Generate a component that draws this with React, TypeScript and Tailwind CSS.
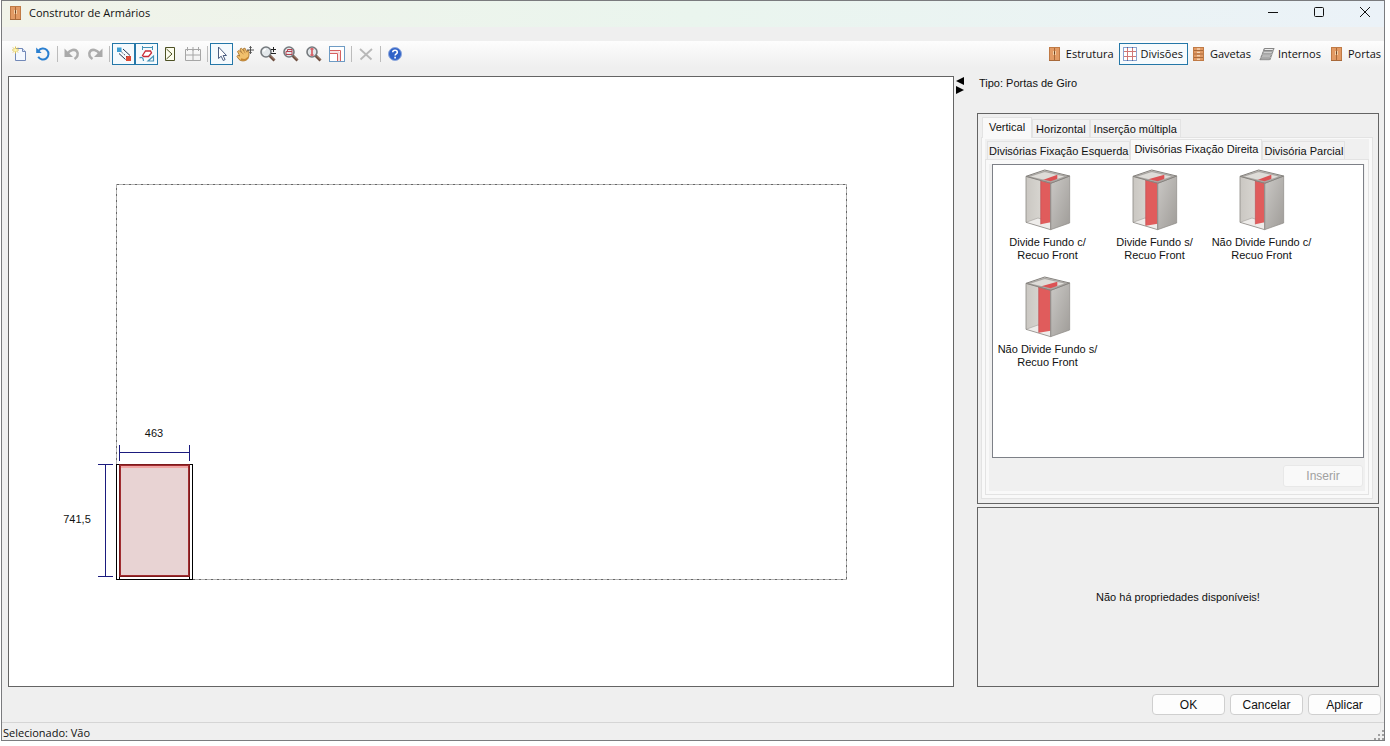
import type { ReactNode } from 'react'

const uiFont = "font-['Open_Sans','Noto_Sans',sans-serif]"
const formFont = "font-['Liberation_Sans',Arial,sans-serif]"

function Svg({ children }: { children: ReactNode }) {
  return (
    <svg width="16" height="16" viewBox="0 0 16 16" fill="none" aria-hidden="true" className="shrink-0">
      {children}
    </svg>
  )
}

const CabinetIcon = () => (
  <Svg>
    <rect x="2.5" y="1.5" width="10" height="13" fill="#e29a64" stroke="#c07a45" />
    <path d="M7.500 2v12" stroke="#a8693a" />
    <path d="M6.500 5v4M8.500 5v4" stroke="#f3cfa6" />
    <path d="M7.500 5.500v2.500" stroke="#6f4526" />
    <path d="M2 14.500h11" stroke="#a8693a" />
  </Svg>
)

const DrawersIcon = () => (
  <Svg>
    <rect x="2.500" y="1.500" width="10" height="13" fill="#e29a64" stroke="#c07a45" />
    <path d="M3 4.500h9M3 8h9M3 11.500h9" stroke="#a8693a" />
    <path d="M6 3h3M6 6.300h3M6 9.800h3M6 13.200h3" stroke="#fbe9d2" />
  </Svg>
)

const GridIcon = () => (
  <Svg>
    <rect x="1.500" y="1.500" width="13" height="13" fill="#fff" stroke="#8ba3cf" />
    <path d="M5.500 2v12M10.500 2v12M2 5.500h12M2 10.500h12" stroke="#d07676" />
    <path d="M5.500 1v1M10.500 1v1M5.500 14v1M10.500 14v1" stroke="#4a66a0" />
  </Svg>
)

const ShelvesIcon = () => (
  <Svg>
    <path d="M5.500 2.500h9.500l-1.300 2H4.500zM4.300 5.800h9.500l-1.300 2H3.300zM3.100 9h9.500l-1.300 2H2.100zM1.900 12.200h9.500l-.9 1.500H1z" fill="#ececec" stroke="#7b7b7b" strokeWidth="0.900" />
    <path d="M5.500 2 1 14M15 2.500l-4 11.500" stroke="#8f8f8f" strokeWidth="0.800" />
  </Svg>
)

const NewIcon = () => (
  <Svg>
    <path d="M3.500 2.500h7l3 3v9h-10z" fill="#f4f8ff" stroke="#7289b8" />
    <path d="M10.500 2.500v3h3" fill="#dce7fa" stroke="#7289b8" />
    <path d="M3.500 .5v7M0 4h7M1 1.500l5 5M6 1.500l-5 5" stroke="#e0c24a" />
    <circle cx="3.500" cy="4" r="1.500" fill="#fff7ae" />
  </Svg>
)

const RefreshIcon = () => (
  <Svg>
    <path d="M3.500 4.800A5.500 5.500 0 1 1 3.200 10.800" stroke="#2a7fd0" strokeWidth="2" />
    <path d="M1.200 1.500v5.500H6.700z" fill="#2a7fd0" />
  </Svg>
)

const UndoIcon = () => (
  <Svg>
    <path d="M3.500 7.500C6 4 11 2.500 13 5.500s0 6-2.500 7.500" stroke="#adadad" strokeWidth="2.600" />
    <path d="M.5 2.500v8.500H9z" fill="#a9a9a9" />
  </Svg>
)

const RedoIcon = () => (
  <Svg>
    <path d="M12.500 7.500C10 4 5 2.500 3 5.500s0 6 2.500 7.500" stroke="#adadad" strokeWidth="2.600" />
    <path d="M15.500 2.500v8.500H7z" fill="#a9a9a9" />
  </Svg>
)

const LinkIcon = () => (
  <Svg>
    <rect x="1" y="1.500" width="4.500" height="4.500" fill="#3f9fd4" />
    <rect x="10" y="10" width="5" height="5" fill="#dc4a36" />
    <path d="M7 3l7 6.500M3 7.500l6.500 6" stroke="#26344c" />
    <path d="M5.500 6l5 4.500" stroke="#26344c" strokeDasharray="1.500 1.500" />
  </Svg>
)

const ShapesIcon = () => (
  <Svg>
    <path d="M3.500 0v4M13.500 0v4M3.500 1.500h10" stroke="#4692b8" />
    <path d="M3.500 9.500 6.500 5H11.500l1 2-3 3.500H4.500z" fill="#fff" stroke="#c92a35" strokeWidth="1.300" />
    <path d="M.5 12c2-1.500 4 0 4 3M14.500 10v5H9z" stroke="#4692b8" strokeWidth="1.200" />
  </Svg>
)

const PanelIcon = () => (
  <Svg>
    <path d="M3.500 1.500h9v13h-9z" fill="#fcfced" stroke="#4d5124" />
    <path d="M4.500 3l5.500 5-5.500 5" stroke="#4d5124" />
  </Svg>
)

const TableIcon = () => (
  <Svg>
    <path d="M.5 3.500h15v11H.5zM.5 9h15M8 3v12M2.500 1v4M8 1v4M13.500 1v4" stroke="#a6a6a6" />
  </Svg>
)

const CursorIcon = () => (
  <Svg>
    <path d="M4.500 1v11.500l2.700-2.300 2 4.300 1.900-.9-2-4.100h3.400z" fill="#fff" stroke="#4a5d80" />
  </Svg>
)

const HandIcon = () => (
  <svg width="18" height="16" viewBox="0 0 18 16" fill="none" aria-hidden="true" className="shrink-0">
    <path d="M1.500 5.500 3 4.500l2.500 2L4 3l1.500-.8 2.500 3L7.500 2.500l1.500-.3 2 4 .5-1.700h1.300c.2 3 .7 6.500-1.300 8.500-2 2.300-6 2.600-8.500.4L1 10.500l.8-1.200 2 .8z" fill="#f1c06c" stroke="#a87530" strokeWidth="0.900" />
    <path d="M5.500 6.500l2 1.500M8 5.200l1.200 2" stroke="#b98240" strokeWidth="0.800" />
    <path d="M5 13c3 1.500 5.500 1 7-1.500" stroke="#c58530" strokeWidth="1.500" />
    <path d="M14.500 .5v7M11 4h7M13.300 1.700l1.200-1.200 1.200 1.200M13.300 6.300l1.200 1.200 1.200-1.200" stroke="#444" strokeWidth="0.900" />
  </svg>
)

function Magnifier({ children }: { children: ReactNode }) {
  return (
    <Svg>
      <path d="M9.500 9.500l5 5" stroke="#6b4b3d" strokeWidth="2.800" />
      <path d="M10.500 9.800l4 4" stroke="#b08b76" strokeWidth="0.900" />
      <circle cx="6" cy="6" r="5" fill="#e3e8eb" stroke="#74797d" strokeWidth="1.600" />
      {children}
    </Svg>
  )
}

const ZoomIcon = () => (
  <Magnifier>
    <path d="M3.500 5.500c.3-1.500 1.200-2.200 2.500-2.300" stroke="#fff" strokeWidth="1.500" />
    <path d="M11 3.500h5M13.500 1v5M11 7.500h5" stroke="#222" />
  </Magnifier>
)

const ZoomWindowIcon = () => (
  <Magnifier>
    <path d="M3 5.500h6v3H3z" stroke="#b64450" />
    <path d="M4.500 5.500v-2H9v2" stroke="#b64450" />
  </Magnifier>
)

const ZoomFitIcon = () => (
  <Magnifier>
    <path d="M4.500 3h3M4.500 9h3M6 3v6" stroke="#d8656b" strokeWidth="1.800" />
  </Magnifier>
)

const FrameIcon = () => (
  <Svg>
    <rect x=".5" y=".5" width="15" height="15" fill="#fff" stroke="#6e9bc4" />
    <path d="M1 4.500h10.500V15M1 7.500h7.500V15" stroke="#d66060" />
    <path d="M1 6h9v9" stroke="#f1c6c6" />
  </Svg>
)

const DeleteIcon = () => (
  <Svg>
    <path d="M2 3l11.500 10.500M14 3 2.500 13.500" stroke="#b8b8b8" strokeWidth="1.800" />
  </Svg>
)

const HelpIcon = () => (
  <Svg>
    <circle cx="8" cy="8" r="6.500" fill="#2f62c8" stroke="#8fa9dd" />
    <path d="M5.700 6.300C5.800 3.500 10.300 3.500 10.300 6.200c0 1.600-2.200 1.600-2.200 3.300M8.100 10.800v1.800" stroke="#fff" strokeWidth="1.600" />
  </Svg>
)

function ToolButton({ label, active = false, children }: { label: string; active?: boolean; children: ReactNode }) {
  return (
    <button
      type="button"
      aria-label={label}
      title={label}
      aria-pressed={active}
      className={`flex h-[22px] w-[23px] items-center justify-center border ${active ? 'border-[#2477a8] bg-[#f5fafd]' : 'border-transparent'}`}
    >
      {children}
    </button>
  )
}

const Separator = () => (
  <div className="flex h-[22px] w-1.5 items-center justify-center">
    <div className="h-4 w-px bg-[#bcbcbc]" />
  </div>
)

function SectionButton({ label, active = false, children }: { label: string; active?: boolean; children: ReactNode }) {
  return (
    <button
      type="button"
      aria-pressed={active}
      className={`flex h-[22px] items-center gap-[3px] border pr-1 pl-0.5 text-[11px] leading-4 ${active ? 'border-[#2477a8] bg-[#f7fbfd]' : 'border-transparent'}`}
    >
      {children}
      {label}
    </button>
  )
}

function Toolbar() {
  return (
    <div className="mt-[14px] flex h-[26px] items-center justify-between bg-linear-to-b from-[#fdfdfd] to-[#efefef] pl-[6px]">
      <div className="flex items-center" role="toolbar" aria-label="Ferramentas">
        <ToolButton label="Novo"><NewIcon /></ToolButton>
        <ToolButton label="Atualizar"><RefreshIcon /></ToolButton>
        <Separator />
        <ToolButton label="Desfazer"><UndoIcon /></ToolButton>
        <ToolButton label="Refazer"><RedoIcon /></ToolButton>
        <Separator />
        <ToolButton label="Associar" active><LinkIcon /></ToolButton>
        <ToolButton label="Cotas" active><ShapesIcon /></ToolButton>
        <ToolButton label="Painel"><PanelIcon /></ToolButton>
        <ToolButton label="Tabela"><TableIcon /></ToolButton>
        <Separator />
        <ToolButton label="Selecionar" active><CursorIcon /></ToolButton>
        <ToolButton label="Mover"><HandIcon /></ToolButton>
        <ToolButton label="Zoom"><ZoomIcon /></ToolButton>
        <ToolButton label="Zoom janela"><ZoomWindowIcon /></ToolButton>
        <ToolButton label="Zoom total"><ZoomFitIcon /></ToolButton>
        <ToolButton label="Quadro"><FrameIcon /></ToolButton>
        <Separator />
        <ToolButton label="Excluir"><DeleteIcon /></ToolButton>
        <Separator />
        <ToolButton label="Ajuda"><HelpIcon /></ToolButton>
      </div>
      <nav className="-mr-0.5 flex items-center" aria-label="Seções">
        <SectionButton label="Estrutura"><CabinetIcon /></SectionButton>
        <SectionButton label="Divisões" active><GridIcon /></SectionButton>
        <SectionButton label="Gavetas"><DrawersIcon /></SectionButton>
        <SectionButton label="Internos"><ShelvesIcon /></SectionButton>
        <SectionButton label="Portas"><CabinetIcon /></SectionButton>
      </nav>
    </div>
  )
}

function Drawing() {
  return (
    <svg viewBox="0 0 944 609" className="h-full w-full" role="img" aria-label="Vista frontal">
      <rect x="107.500" y="107.500" width="730" height="395" fill="none" stroke="#666" strokeDasharray="3 1 1 1" />
      <g fill="#fff" stroke="#000">
        <rect x="107.500" y="387.500" width="3" height="115" />
        <rect x="180.500" y="387.500" width="3" height="115" />
        <rect x="110.500" y="499.500" width="70" height="3" />
      </g>
      <rect x="111" y="388" width="69" height="111" fill="#e8d3d3" stroke="#a02c30" strokeWidth="2" />
      <path d="M112 390h67" stroke="#f0a5a5" strokeWidth="2" />
      <path d="M110 387.500h71M110.500 388v111M180.500 388v111M110 499.500h71" stroke="#7c1a1c" />
      <path d="M110.500 368v16M180.500 368v16M110 375.500h71M96.500 387v113M89 387.500h15M89 499.500h15" stroke="#1b1b7e" />
      <g fill="#111" className="font-['Liberation_Sans',Arial,sans-serif] text-[11px]" textAnchor="middle">
        <text x="145" y="360">463</text>
        <text x="68" y="446">741,5</text>
      </g>
    </svg>
  )
}

type Divider = { name: string; x: number; top: number; bottom: number }

const dividers: Divider[] = [
  { name: 'Divide Fundo c/ Recuo Front', x: 44, top: 32, bottom: 163 },
  { name: 'Divide Fundo s/ Recuo Front', x: 38, top: 30, bottom: 167 },
  { name: 'Não Divide Fundo c/ Recuo Front', x: 46, top: 32, bottom: 163 },
  { name: 'Não Divide Fundo s/ Recuo Front', x: 38, top: 30, bottom: 167 },
]

function DividerPicture({ x, top, bottom }: { x: number; top: number; bottom: number }) {
  return (
    <svg width="46" height="62" viewBox="-3 -3 138 186" aria-hidden="true">
      <defs>
        <linearGradient id="side" x1="0" y1="0" x2="1" y2="1">
          <stop offset="0" stopColor="#cbc9c6" />
          <stop offset="1" stopColor="#9f9c98" />
        </linearGradient>
        <linearGradient id="inside" x1="0" y1="0" x2="1" y2="0">
          <stop offset="0" stopColor="#cac7c2" />
          <stop offset="1" stopColor="#e0ded9" />
        </linearGradient>
      </defs>
      <path d="M0 19 56 0l75 18-57 22z" fill="#dedcd8" />
      <path d="M0 19l74 21v139L0 157z" fill="url(#inside)" />
      <path d="M0 157l36-13 38 12v23z" fill="#eeecea" />
      <path d="M36 144 0 157M36 144l38 12" stroke="#a8a5a0" strokeWidth="2" fill="none" />
      <path d={`M${x} ${top} 74 40v${bottom - 46}L${x} ${bottom}z`} fill="#e05c5c" />
      <path d={`M${x} ${top} 94 14v13L74 40z`} fill="#dc5254" />
      <path d="M74 40l57-22v141l-57 20z" fill="url(#side)" stroke="#8b8884" strokeWidth="2" />
      <path d="M6 20l50-16 66 15-48 17z" fill="none" stroke="#aaa7a3" strokeWidth="4" />
      <path d="M0 19 56 0l75 18-57 22z" fill="none" stroke="#85827e" strokeWidth="3" strokeLinejoin="round" />
      <path d="M0 19v138l74 22V40" fill="none" stroke="#8f8c88" strokeWidth="2.500" />
      <path d={`M${x} ${top}V${bottom}`} stroke="#b53b40" strokeWidth="1.500" />
    </svg>
  )
}

function Tab({ label, active = false, compact = false }: { label: string; active?: boolean; compact?: boolean }) {
  const shape = active ? 'relative -mb-px h-[21px] bg-[#f9f9f9] pb-[3px]' : 'h-[18px] bg-[#f2f2f2]'
  const padding = compact ? (active ? 'px-[3px]' : 'px-px') : active ? 'px-[6px]' : 'px-[3px]'
  return (
    <button
      type="button"
      role="tab"
      aria-selected={active}
      className={`border border-b-0 border-[#e3e3e3] text-[11px] leading-[14px] whitespace-nowrap ${shape} ${padding}`}
    >
      {label}
    </button>
  )
}

function DivisionsPanel() {
  return (
    <section className="flex min-h-0 flex-1 flex-col border border-[#646464] pt-[3px] pr-[5px] pb-1 pl-[3px]">
      <div className="flex items-end pl-px" role="tablist">
        <Tab label="Vertical" active />
        <Tab label="Horizontal" />
        <Tab label="Inserção múltipla" />
      </div>
      <div className="flex min-h-0 flex-1 flex-col border border-[#e3e3e3] bg-[#f9f9f9] px-[3px] pt-px pb-[3px]">
        <div className="flex items-end bg-[#f0f0f0] pl-0.5" role="tablist">
          <Tab label="Divisórias Fixação Esquerda" compact />
          <Tab label="Divisórias Fixação Direita" compact active />
          <Tab label="Divisória Parcial" compact />
        </div>
        <div className="flex min-h-0 flex-1 flex-col border border-[#e3e3e3] bg-[#f9f9f9] px-[3px] pt-1 pb-[3px]">
          <div className="flex min-h-0 flex-1 flex-col bg-[#f0f0f0] pr-px pb-1 pl-[3px]">
            <ul className="flex min-h-0 flex-1 flex-wrap content-start border border-[#7d8087] bg-white pl-px">
              {dividers.map((item) => (
                <li key={item.name}>
                  <button type="button" className="flex h-[107px] w-[107px] flex-col items-center gap-[5px] pt-1 text-[11px] leading-[13px]">
                    <DividerPicture x={item.x} top={item.top} bottom={item.bottom} />
                    <span className="px-0.5">{item.name}</span>
                  </button>
                </li>
              ))}
            </ul>
            <button type="button" disabled className="mt-[7px] mr-px h-[22px] w-20 self-end rounded-[3px] border border-[#e8e8e8] bg-[#f9f9f9] text-[12px] leading-4 text-[#a0a0a0]">
              Inserir
            </button>
          </div>
        </div>
      </div>
    </section>
  )
}

function DialogButton({ label }: { label: string }) {
  return (
    <button type="button" className="h-[21px] w-[73px] rounded-[4px] border border-[#cfcfcf] bg-[#fdfdfd] text-[12px] leading-4">
      {label}
    </button>
  )
}

export default function App() {
  return (
    <div className={`h-screen bg-white pr-[5px] pb-[5px] pl-px text-[#111] ${uiFont}`}>
      <div className="flex h-full flex-col border border-[#7a7b7e] bg-[#efefef]">
        <header className="flex h-[26px] items-start justify-between bg-linear-to-r from-[#f1f3e9] via-[#eaf5ee] to-[#ebf2f8]">
          <div className="flex items-center gap-[5px] pt-1 pl-[6px]">
            <CabinetIcon />
            <h1 className="text-[11px] leading-4">Construtor de Armários</h1>
          </div>
          <div className="flex">
            <button type="button" aria-label="Minimizar" className="flex h-[22px] w-[46px] items-center justify-center">
              <svg width="12" height="12" viewBox="0 0 12 12" stroke="#111"><path d="M1 6.500h10" /></svg>
            </button>
            <button type="button" aria-label="Maximizar" className="flex h-[22px] w-[46px] items-center justify-center">
              <svg width="12" height="12" viewBox="0 0 12 12" fill="none" stroke="#111"><rect x="1.500" y="1.500" width="9" height="9" rx="1" /></svg>
            </button>
            <button type="button" aria-label="Fechar" className="ml-1 flex h-[22px] w-[38px] items-center justify-center">
              <svg width="12" height="12" viewBox="0 0 12 12" stroke="#111"><path d="M1 1l10 10M11 1 1 11" /></svg>
            </button>
          </div>
        </header>
        <Toolbar />
        <main className="mt-[9px] flex min-h-0 flex-1 pr-[5px] pl-[6px]">
          <div className="min-w-0 flex-1 border border-[#646464] bg-white">
            <Drawing />
          </div>
          <div className="w-[23px] pl-0.5">
            <button type="button" aria-label="Alternar painel lateral" className="block">
              <svg width="10" height="20" viewBox="0 0 10 20" fill="#000"><path d="M8 1v8L0 5zM0 10v8l8-4z" /></svg>
            </button>
          </div>
          <aside className={`flex w-[402px] flex-col ${formFont}`}>
            <p className="h-[37px] pl-0.5 text-[11px] leading-[14px]">Tipo: Portas de Giro</p>
            <DivisionsPanel />
            <section className="mt-[3px] flex h-[180px] items-center justify-center border border-[#646464] text-[11px]">
              Não há propriedades disponíveis!
            </section>
          </aside>
        </main>
        <div className={`flex justify-end gap-[5px] pt-[7px] pr-[3px] pb-[7px] ${formFont}`}>
          <DialogButton label="OK" />
          <DialogButton label="Cancelar" />
          <DialogButton label="Aplicar" />
        </div>
        <footer className="flex h-[18px] items-end justify-between border-t border-[#d5d5d5] pl-px text-[11px] leading-[14px]">
          <span>Selecionado: Vão</span>
          <svg width="10" height="10" viewBox="0 0 10 10" fill="#a0a0a0" aria-hidden="true">
            <path d="M8 0h2v2H8zM8 4h2v2H8zM4 4h2v2H4zM8 8h2v2H8zM4 8h2v2H4zM0 8h2v2H0z" />
          </svg>
        </footer>
      </div>
    </div>
  )
}
